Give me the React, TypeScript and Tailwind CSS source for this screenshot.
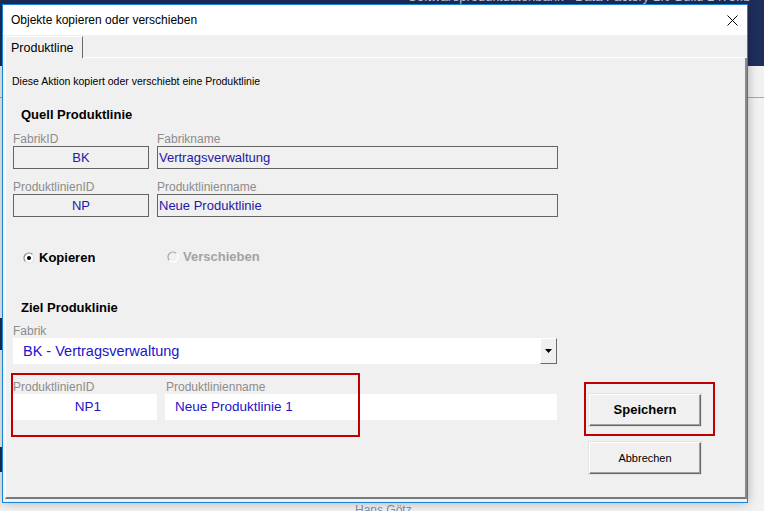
import React from "react";

function Radio({ checked, disabled }: { checked?: boolean; disabled?: boolean }) {
  return (
    <svg width="12" height="12" viewBox="0 0 12 12" className="shrink-0">
      <circle cx="6" cy="6" r="5" fill={disabled ? "#f0f0f0" : "#ffffff"} />
      <path d="M2.46 9.54 A5 5 0 0 1 9.54 2.46" stroke={disabled ? "#a6a6a6" : "#8a8a8a"} fill="none" strokeWidth="1.2" />
      <path d="M9.54 2.46 A5 5 0 0 1 2.46 9.54" stroke={disabled ? "#ffffff" : "#e3e3e3"} fill="none" strokeWidth="1.2" />
      {checked && <circle cx="6" cy="6" r="2" fill="#000000" />}
    </svg>
  );
}

function WinButton({ children, bold }: { children: React.ReactNode; bold?: boolean }) {
  return (
    <div
      className={
        "w-[112px] h-[32px] flex items-center justify-center bg-[#f0f0f0] border border-t-white border-l-white border-r-[#696969] border-b-[#696969] shadow-[inset_-1px_-1px_0_#a0a0a0,0_0_0_1px_#e3e3e3] text-black " +
        (bold ? "text-[13px] font-bold" : "text-[11px]")
      }
    >
      {children}
    </div>
  );
}

export default function App() {
  return (
    <div className="relative w-[764px] h-[511px] overflow-hidden bg-[#f2f2f2] font-['Liberation_Sans',Arial,sans-serif]">
      {/* desktop background */}
      <div className="relative h-[66px] bg-[#1e2f5c] overflow-hidden">
        <div className="absolute left-[408px] top-[-10px] text-[13px] leading-[14px] text-[#c9d1e3] whitespace-nowrap">
          Softwareproduktdatenbank - Data Factory 1.0 Build 2473.fb
        </div>
      </div>
      <div className="h-[31px]" />
      <div className="h-px bg-[#a8a8a8]" />
      <div className="absolute left-0 top-[318px] w-[2px] h-[32px] bg-[#1e2f5c]" />
      <div className="absolute left-0 top-[447px] w-[2px] h-[25px] bg-[#1e2f5c]" />
      <div className="absolute left-[355px] top-[503px] text-[12px] leading-[14px] text-[#7d8fb3] whitespace-nowrap">
        Hans Götz
      </div>

      {/* dialog window */}
      <div className="absolute left-[2px] top-[4px] w-[746px] h-[499px] border border-[#1883d7] bg-[#f0f0f0] flex flex-col shadow-[0_0_10px_rgba(0,0,0,0.28)]">
        {/* title bar */}
        <div className="h-[30px] shrink-0 bg-white flex items-center justify-between pl-[8px] pr-[9px]">
          <span className="text-[12px] text-black leading-[14px]">Objekte kopieren oder verschieben</span>
          <svg width="11" height="11" viewBox="0 0 11 11">
            <path d="M0.5 0.5 L10.5 10.5 M10.5 0.5 L0.5 10.5" stroke="#000" strokeWidth="1" />
          </svg>
        </div>

        <div className="flex-1 flex flex-col pl-[2px] pb-[3px]">
          {/* tab strip */}
          <div className="h-[23px] shrink-0 flex items-end">
            <div className="w-[78px] h-[22px] flex items-center pl-[5px] border-l border-t border-white border-r border-r-[#696969] text-[12.5px] text-black leading-[14px]">
              Produktline
            </div>
            <div className="flex-1 h-px bg-white" />
          </div>

          {/* tab page */}
          <div className="relative flex-1 flex flex-col pl-[7px] border-l border-white border-r-2 border-b-2 border-r-[#8a8a8a] border-b-[#7a7a7a] text-black">
            <div className="-ml-[1px] mt-[16px] text-[10.5px] leading-[14px]">
              Diese Aktion kopiert oder verschiebt eine Produktlinie
            </div>
            <div className="ml-[8px] mt-[19px] text-[13px] font-bold leading-[16px]">Quell Produktlinie</div>

            {/* source rows */}
            <div className="mt-[9px] flex gap-[8px]">
              <div className="w-[136px] flex flex-col">
                <span className="text-[12px] leading-[14px] text-[#8c8c8c]">FabrikID</span>
                <div className="h-[23px] border border-[#646464] flex items-center justify-center text-[13px] text-[#2419a3]">BK</div>
              </div>
              <div className="w-[401px] flex flex-col">
                <span className="text-[12px] leading-[14px] text-[#8c8c8c]">Fabrikname</span>
                <div className="h-[23px] border border-[#646464] flex items-center pl-[1px] text-[13px] text-[#2419a3]">Vertragsverwaltung</div>
              </div>
            </div>
            <div className="mt-[11px] flex gap-[8px]">
              <div className="w-[136px] flex flex-col">
                <span className="text-[12px] leading-[14px] text-[#8c8c8c]">ProduktlinienID</span>
                <div className="h-[23px] border border-[#646464] flex items-center justify-center text-[13px] text-[#2419a3]">NP</div>
              </div>
              <div className="w-[401px] flex flex-col">
                <span className="text-[12px] leading-[14px] text-[#8c8c8c]">Produktlinienname</span>
                <div className="h-[23px] border border-[#646464] flex items-center pl-[1px] text-[13px] text-[#2419a3]">Neue Produktlinie</div>
              </div>
            </div>

            {/* radios */}
            <div className="mt-[33px] h-[16px] flex items-center">
              <div className="ml-[10px] w-[144px] flex items-center gap-[4px]">
                <Radio checked />
                <span className="text-[13px] font-bold leading-[16px]">Kopieren</span>
              </div>
              <div className="flex items-center gap-[4px] -mt-[2px]">
                <Radio disabled />
                <span className="text-[13px] font-bold leading-[16px] text-[#a3a3a3]">Verschieben</span>
              </div>
            </div>

            <div className="ml-[8px] mt-[34px] text-[13px] font-bold leading-[16px]">Ziel Produklinie</div>
            <span className="mt-[8px] text-[12px] leading-[14px] text-[#8c8c8c]">Fabrik</span>
            <div className="w-[544px] h-[26px] bg-white flex items-center">
              <span className="flex-1 pl-[10px] text-[14.5px] text-[#2214c8] leading-[18px]">BK - Vertragsverwaltung</span>
              <div className="w-[17px] h-[26px] bg-[#f0f0f0] border border-t-white border-l-white border-r-[#696969] border-b-[#696969] flex items-center justify-center">
                <svg width="7" height="4" viewBox="0 0 7 4">
                  <path d="M0 0 H7 L3.5 4 Z" fill="#000" />
                </svg>
              </div>
            </div>

            {/* target row + buttons */}
            <div className="mt-[15px] flex">
              <div className="flex gap-[8px]">
                <div className="w-[144px] flex flex-col">
                  <span className="pt-[1px] text-[12px] leading-[14px] text-[#8c8c8c]">ProduktlinienID</span>
                  <div className="h-[26px] bg-white flex items-center justify-center pl-[6px] text-[13.5px] text-[#2214c8]">NP1</div>
                </div>
                <div className="w-[392px] flex flex-col">
                  <span className="pt-[1px] pl-[1px] text-[12px] leading-[14px] text-[#8c8c8c]">Produktlinienname</span>
                  <div className="h-[26px] bg-white flex items-center pl-[10px] text-[13.5px] text-[#2214c8]">Neue Produktlinie 1</div>
                </div>
              </div>
              <div className="ml-[32px] pt-[15px] flex flex-col gap-[16px]">
                <WinButton bold>Speichern</WinButton>
                <WinButton>Abbrechen</WinButton>
              </div>
            </div>

            {/* red annotation boxes */}
            <div className="absolute left-[5px] top-[315px] w-[349px] h-[64px] border-2 border-[#c00000] pointer-events-none" />
            <div className="absolute left-[578px] top-[324px] w-[131px] h-[54px] border-2 border-[#c00000] pointer-events-none" />
          </div>
        </div>
      </div>
    </div>
  );
}
